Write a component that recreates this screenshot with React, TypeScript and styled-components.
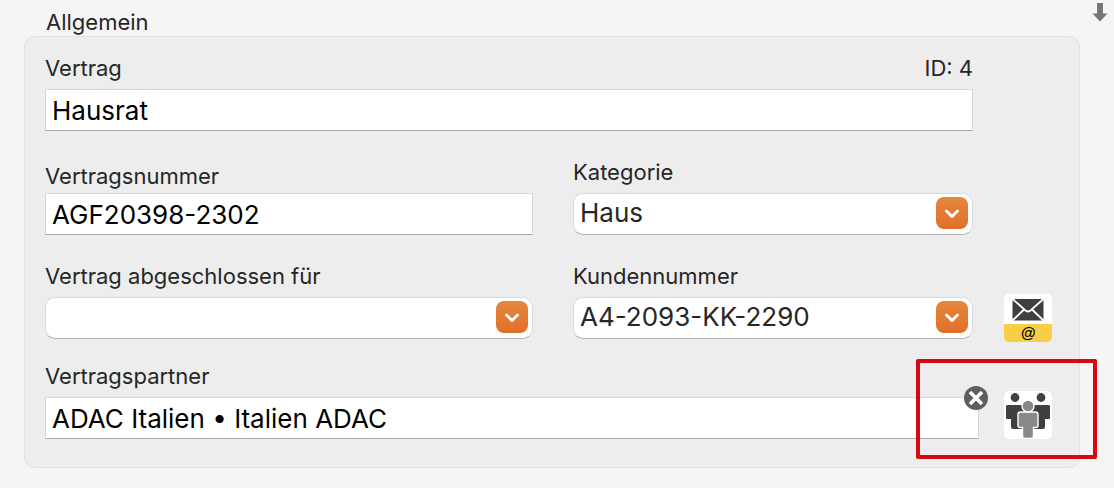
import React from "react";
import styled, { createGlobalStyle } from "styled-components";

const GlobalStyle = createGlobalStyle`
  *, *::before, *::after { box-sizing: border-box; }
  body {
    margin: 0;
    background: #f5f5f5;
    color: #262626;
    font-family: Inter, "Liberation Sans", sans-serif;
    font-size: 22px;
    line-height: 26px;
  }
`;

const Header = styled.header`
  display: flex;
  justify-content: space-between;
  align-items: flex-start;
  padding: 3px 6px 1px 46px;
`;

const Title = styled.h1`
  margin: 6px 0 0;
  font-size: 22px;
  font-weight: 400;
  line-height: 26px;
`;

const ScrollArrow = styled.svg`
  display: block;
  width: 16px;
  height: 19px;
  fill: #777;
`;

const Panel = styled.form`
  display: flex;
  flex-direction: column;
  gap: 28px;
  margin: 0 34px 20px 24px;
  padding: 18px 27px 28px 20px;
  border: 1px solid #e2e2e2;
  border-radius: 10px;
  background: #ededed;
`;

const Group = styled.div`
  display: flex;
  flex-direction: column;
  gap: 24px;
`;

const Row = styled.div<{ $gap?: number }>`
  position: relative;
  display: flex;
  align-items: flex-end;
  gap: ${(p) => p.$gap ?? 31}px;
`;

const Columns = styled.div`
  flex: 1;
  display: grid;
  grid-template-columns: minmax(0, 488fr) minmax(0, 400fr);
  align-items: end;
  column-gap: 40px;
`;

const Field = styled.div<{ $tight?: boolean }>`
  flex: 1;
  display: flex;
  flex-direction: column;
  gap: ${(p) => (p.$tight ? 4 : 8)}px;
  min-width: 0;
`;

const LabelLine = styled.div`
  display: flex;
  justify-content: space-between;
`;

const Control = styled.div`
  position: relative;
  display: flex;
`;

const TextInput = styled.input`
  width: 100%;
  height: 42px;
  padding: 0 6px;
  border: 1px solid #d6d6d6;
  border-bottom-color: #a9a9a9;
  border-radius: 0;
  background: #fff;
  color: #000;
  font: 400 26px/30px Inter, "Liberation Sans", sans-serif;
`;

const Select = styled.select`
  appearance: none;
  width: 100%;
  height: 42px;
  padding: 0 44px 2px 6px;
  border: 1px solid #d9d9d9;
  border-bottom-color: #b0b0b0;
  border-radius: 10px;
  background: #fff;
  color: #262626;
  font: 400 26px/30px Inter, "Liberation Sans", sans-serif;
`;

const Chevron = styled.span`
  position: absolute;
  top: 4px;
  right: 5px;
  width: 32px;
  height: 32px;
  border-radius: 8px;
  background: linear-gradient(#e5873c, #e2702a);
  pointer-events: none;

  svg {
    display: block;
    width: 32px;
    height: 32px;
  }
`;

const ClearButton = styled.button`
  position: absolute;
  top: -11px;
  right: -9px;
  width: 24px;
  height: 24px;
  padding: 0;
  border: 0;
  border-radius: 50%;
  background: #5e5e5e;

  svg {
    display: block;
  }
`;

const Aside = styled.div<{ $align?: string }>`
  flex: none;
  display: flex;
  align-items: ${(p) => p.$align ?? "center"};
  width: 48px;
  height: 42px;
`;

const IconButton = styled.button`
  flex: none;
  width: 48px;
  height: 48px;
  padding: 0;
  overflow: hidden;
  border: 0;
  border-radius: 5px;
  background: #fff;
  color: #000;

  svg {
    display: block;
  }
`;

const MailSign = styled.span`
  display: block;
  height: 18px;
  background: #f7ce46;
  font: italic 700 15px/17px "Liberation Sans", sans-serif;
  text-align: center;
`;

const Highlight = styled.div`
  position: absolute;
  top: -4px;
  right: -45px;
  bottom: -20px;
  width: 181px;
  border: 4px solid #d40a10;
  border-radius: 2px;
  pointer-events: none;
`;

function Dropdown({ id, label, value }: { id: string; label: string; value: string }) {
  return (
    <Field>
      <label htmlFor={id}>{label}</label>
      <Control>
        <Select id={id} defaultValue={value}>
          <option value={value}>{value}</option>
        </Select>
        <Chevron>
          <svg viewBox="0 0 32 32" fill="none" stroke="#fff" strokeWidth="3" strokeLinecap="round" strokeLinejoin="round">
            <path d="M10.500 14l5.500 5.500 5.500-5.500" />
          </svg>
        </Chevron>
      </Control>
    </Field>
  );
}

export default function App() {
  return (
    <>
      <GlobalStyle />
      <Header>
        <Title>Allgemein</Title>
        <ScrollArrow viewBox="0 0 16 19" aria-hidden="true">
          <path d="M5 0h6v10.5h4.5L8 18.5.5 10.5H5z" />
        </ScrollArrow>
      </Header>
      <Panel>
        <Row>
          <Field>
            <LabelLine>
              <label htmlFor="vertrag">Vertrag</label>
              <span>ID: 4</span>
            </LabelLine>
            <TextInput id="vertrag" defaultValue="Hausrat" />
          </Field>
          <Aside />
        </Row>
        <Row>
          <Columns>
            <Field $tight>
              <label htmlFor="nummer">Vertragsnummer</label>
              <TextInput id="nummer" defaultValue="AGF20398-2302" />
            </Field>
            <Dropdown id="kategorie" label="Kategorie" value="Haus" />
          </Columns>
          <Aside />
        </Row>
        <Group>
          <Row>
            <Columns>
              <Dropdown id="person" label="Vertrag abgeschlossen für" value="" />
              <Dropdown id="kunde" label="Kundennummer" value="A4-2093-KK-2290" />
            </Columns>
            <Aside>
              <IconButton type="button" aria-label="E-Mail">
                <svg width="48" height="30" viewBox="0 0 48 30">
                  <rect x="8.5" y="5" width="31" height="21.5" fill="#3f3f3f" />
                  <path d="M8 4.500l13.500 12q2.500 2 5 0L40 4.500M8 27l12-11.500M40 27L28 15.500" fill="none" stroke="#fff" strokeWidth="1.800" />
                </svg>
                <MailSign>@</MailSign>
              </IconButton>
            </Aside>
          </Row>
          <Row $gap={25}>
            <Field>
              <label htmlFor="partner">Vertragspartner</label>
              <Control>
                <TextInput id="partner" defaultValue="ADAC Italien • Italien ADAC" />
                <ClearButton type="button" aria-label="Entfernen">
                  <svg width="24" height="24" viewBox="0 0 24 24" stroke="#fff" strokeWidth="3.6">
                    <path d="M6 6l12 12M18 6L6 18" />
                  </svg>
                </ClearButton>
              </Control>
            </Field>
            <Aside $align="flex-end">
              <IconButton type="button" aria-label="Kontakte">
                <svg width="48" height="48" viewBox="0 0 48 48">
                  <g fill="#404040">
                    <circle cx="11" cy="6.500" r="4.400" />
                    <circle cx="37" cy="6.500" r="4.400" />
                    <path d="M3.500 14H21v22q0 2-2 2H9q-2 0-2-2v-8H3.500Q2 28 2 26.500v-11Q2 14 3.500 14z" />
                    <path d="M44.500 14H27v22q0 2 2 2h10q2 0 2-2v-8h3.500q1.500 0 1.500-1.500v-11q0-1.500-1.500-1.500z" />
                  </g>
                  <g fill="#8a8888" stroke="#fff" strokeWidth="1.400">
                    <path d="M16.500 21h15q2.500 0 2.500 2.500v11q0 2-2 2h-2.500v8.500q0 2.500-2.500 2.500h-6q-2.500 0-2.500-2.500v-8.500H16q-2 0-2-2v-11Q14 21 16.500 21z" />
                    <circle cx="24" cy="15" r="6" />
                  </g>
                </svg>
              </IconButton>
            </Aside>
            <Highlight />
          </Row>
        </Group>
      </Panel>
    </>
  );
}
